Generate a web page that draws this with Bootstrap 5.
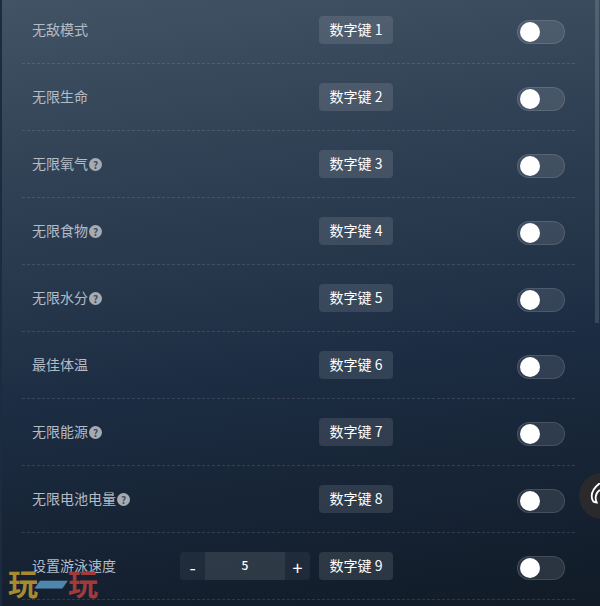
<!DOCTYPE html>
<html lang="zh-CN">
<head>
    <meta charset="UTF-8">
    <meta name="viewport" content="width=device-width, initial-scale=1.0">
    <title>修改器选项</title>
    <link href="https://cdn.jsdelivr.net/npm/bootstrap@5.3.0/dist/css/bootstrap.min.css" rel="stylesheet">
    <style>
        html, body {
            height: 606px;
            overflow: hidden;
        }
        body {
            background: #1b2c40;
            font-family: "Noto Sans CJK SC", "Liberation Sans", sans-serif;
        }
        .trainer-panel {
            height: 606px;
            margin-left: 2px;
            padding: 0 25px 0 20px;
            overflow: hidden;
            position: relative;
            background: linear-gradient(172deg, #425365 0%, #2f3f53 30%, #1c2c42 60%, #111b27 100%);
        }
        .option-list {
            margin-top: -3px;
        }
        .option-row {
            height: 67px;
            padding: 0 10px;
            border-bottom: 1px dashed rgba(255, 255, 255, .12);
        }
        .option-name {
            font-size: 14px;
            color: #b4bcc6;
            margin-top: -1px;
        }
        .help-dot {
            width: 13px;
            height: 13px;
            margin: 1px 0 0 1px;
            border-radius: 50%;
            background: #a6abb3;
            color: #414d5c;
            font-size: 10px;
            font-weight: 700;
            line-height: 13px;
            text-align: center;
        }
        .stepper {
            width: 130px;
            height: 28px;
            margin-right: 9px;
            border-radius: 4px;
            background: rgba(255, 255, 255, .05);
            color: #fff;
        }
        .stepper-btn {
            width: 25px;
            font-size: 18px;
            line-height: 30px;
            text-align: center;
        }
        .stepper-value {
            width: 80px;
            font-size: 12px;
            font-weight: 500;
            line-height: 26px;
            text-align: center;
            background: rgba(255, 255, 255, .07);
        }
        .key-tag {
            width: 74px;
            height: 28px;
            margin-right: 124px;
            border-radius: 4px;
            background: rgba(255, 255, 255, .11);
            color: #fff;
            font-size: 14px;
            line-height: 26px;
            text-align: center;
        }
        .toggle-pill {
            width: 48px;
            height: 24px;
            padding: 1px 2px;
            border: 1px solid rgba(255, 255, 255, .12);
            border-radius: 12px;
            background: rgba(255, 255, 255, .1);
            margin-top: 4px;
        }
        .toggle-knob {
            display: block;
            width: 20px;
            height: 20px;
            border-radius: 50%;
            background: #fff;
        }
        .scroll-thumb {
            position: absolute;
            top: 0;
            right: 1px;
            width: 4px;
            height: 323px;
            background: rgba(255, 255, 255, .13);
        }
        .float-tool {
            position: absolute;
            top: 473px;
            right: -25px;
            width: 46px;
            height: 46px;
            padding-left: 10px;
            border-radius: 50%;
            background: #2a2a2c;
        }
        .site-logo {
            position: absolute;
            left: 6px;
            bottom: 9px;
        }
        .site-logo span {
            display: block;
            font-size: 30px;
            line-height: 30px;
            font-weight: 700;
        }
        .logo-yellow { color: #a98a2c; }
        .logo-blue {
            color: #4f86ad;
            transform: skewX(-35deg) scaleY(2);
        }
        .logo-red { color: #a33a3a; }
    </style>
</head>
<body>
    <div class="trainer-panel">
        <div class="option-list" id="options"></div>
        <div class="scroll-thumb"></div>
        <div class="float-tool d-flex align-items-center">
            <svg width="14" height="26" viewBox="0 0 14 26" fill="none" stroke="#fff" stroke-width="1.800">
                <path d="M11 0C7 3 2.700 7 2.700 13c0 4 2 6.500 5 6.500C6 16 6 10 11 7"/>
            </svg>
        </div>
        <div class="site-logo d-flex"><span class="logo-yellow">玩</span><span class="logo-blue">一</span><span class="logo-red">玩</span></div>
    </div>

    <script>
        const options = [
            { name: '无敌模式', key: 1 },
            { name: '无限生命', key: 2 },
            { name: '无限氧气', key: 3, help: true },
            { name: '无限食物', key: 4, help: true },
            { name: '无限水分', key: 5, help: true },
            { name: '最佳体温', key: 6 },
            { name: '无限能源', key: 7, help: true },
            { name: '无限电池电量', key: 8, help: true },
            { name: '设置游泳速度', key: 9, stepper: 5 }
        ];

        document.getElementById('options').innerHTML = options.map(o => `
            <div class="option-row d-flex align-items-center">
                <span class="option-name">${o.name}</span>
                ${o.help ? '<span class="help-dot">?</span>' : ''}
                <div class="ms-auto d-flex align-items-center">
                    ${o.stepper ? `<div class="stepper d-flex">
                        <span class="stepper-btn">-</span>
                        <span class="stepper-value">${o.stepper}</span>
                        <span class="stepper-btn">+</span>
                    </div>` : ''}
                    <span class="key-tag">数字键 ${o.key}</span>
                    <span class="toggle-pill"><span class="toggle-knob"></span></span>
                </div>
            </div>`).join('');
    </script>
    <script src="https://cdn.jsdelivr.net/npm/bootstrap@5.3.0/dist/js/bootstrap.bundle.min.js"></script>
</body>
</html>
